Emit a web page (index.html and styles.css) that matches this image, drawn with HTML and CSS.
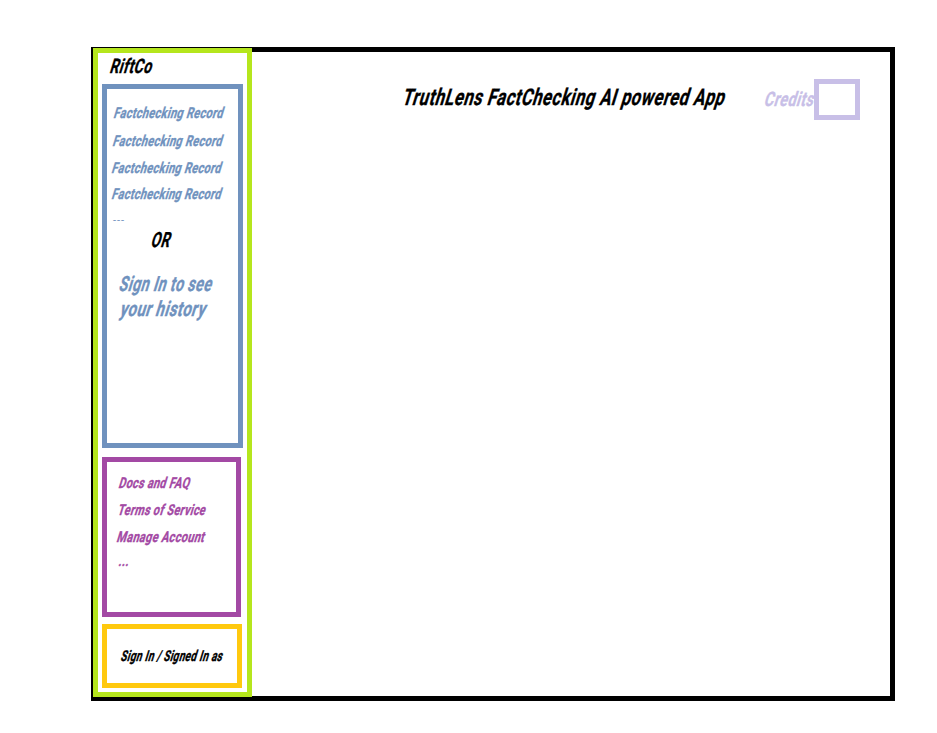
FILE: index.html
```html
<!DOCTYPE html>
<html lang="en">
<head>
<meta charset="utf-8">
<title>TruthLens</title>
<link rel="stylesheet" href="styles.css">
</head>
<body>
<div class="app">
  <aside class="sidebar">
    <div class="text brand">RiftCo</div>
    <section class="panel history">
      <div class="text record r1">Factchecking Record</div>
      <div class="text record r2">Factchecking Record</div>
      <div class="text record r3">Factchecking Record</div>
      <div class="text record r4">Factchecking Record</div>
      <div class="more">---</div>
      <div class="text or">OR</div>
      <div class="text prompt p1">Sign In to see</div>
      <div class="text prompt p2">your history</div>
    </section>
    <nav class="panel links">
      <div class="text link docs">Docs and FAQ</div>
      <div class="text link terms">Terms of Service</div>
      <div class="text link manage">Manage Account</div>
      <div class="text link dots">...</div>
    </nav>
    <section class="panel account">
      <div class="text signin">Sign In / Signed In as</div>
    </section>
  </aside>
  <main class="main">
    <h1 class="text title">TruthLens FactChecking AI powered App</h1>
    <div class="credits">
      <span class="text credits-label">Credits</span>
      <div class="credits-box"></div>
    </div>
  </main>
</div>
</body>
</html>
```
FILE: styles.css
```css
* { box-sizing: border-box; }
body { margin: 0; background: #fff; font-family: Roboto, "Liberation Sans", sans-serif; }
.app {
  display: flex;
  width: 804px;
  height: 654px;
  margin: 47px 0 0 91px;
  border: 5px solid #000;
  border-left-width: 2px;
}
.sidebar {
  width: 159px;
  height: 649px;
  margin-top: -4px;
  padding: 1px 4px 0;
  border: 5px solid #b5e61d;
  background: #fff;
}
.text {
  --sx: 0.73;
  display: block;
  width: max-content;
  font-weight: 700;
  white-space: pre;
  letter-spacing: 0.03em;
  -webkit-text-stroke: 0.35px currentColor;
  transform: skewX(-17deg) scaleX(var(--sx));
  transform-origin: 0 calc(50% + 0.342em);
}
.brand { --sx: 0.7; margin-left: 7px; font-size: 20px; line-height: 24px; }
.panel { border: 5px solid; }
.history { width: 141px; height: 364px; margin-top: 6px; padding-top: 14px; border-color: #7092be; color: #7092be; }
.record { margin-left: 6px; font-size: 15px; line-height: 20px; }
.r2 { margin: 8px 0 0 5px; }
.r3 { margin: 7px 0 0 4px; }
.r4 { margin: 6px 0 0 4px; }
.more { margin: 10px 0 0 6px; font-size: 11px; line-height: 14px; letter-spacing: 1px; }
.or { --sx: 0.65; margin-left: 43px; font-size: 21px; line-height: 24px; color: #000; }
.prompt { --sx: 0.678; margin: 20px 0 0 11px; font-size: 21px; line-height: 24px; }
.p2 { --sx: 0.715; margin: 1px 0 0 12px; }
.links { width: 139px; height: 160px; margin-top: 9px; padding-top: 11px; border-color: #a349a4; color: #a349a4; }
.link { --sx: 0.72; margin-left: 11px; font-size: 15px; line-height: 20px; }
.terms { margin: 7px 0 0 10px; }
.manage { --sx: 0.73; margin: 7px 0 0 9px; }
.dots { margin: 4px 0 0 11px; }
.account { width: 140px; height: 64px; margin-top: 7px; padding-top: 17px; border-color: #ffc90e; }
.signin { --sx: 0.668; margin-left: 13px; font-size: 15px; line-height: 20px; }
.main { position: relative; display: flex; flex: 1; align-items: flex-start; justify-content: space-between; min-width: 0; padding: 27px 30px 0 149px; }
.title { --sx: 0.722; width: 322px; margin: 5px 0 0; font-size: 23px; line-height: 28px; }
.credits { display: flex; }
.credits-label { --sx: 0.72; width: 52px; margin-top: 8px; font-size: 20px; line-height: 24px; color: #c8bfe7; }
.credits-box { width: 46px; height: 41px; border: 5px solid #c8bfe7; }
```
